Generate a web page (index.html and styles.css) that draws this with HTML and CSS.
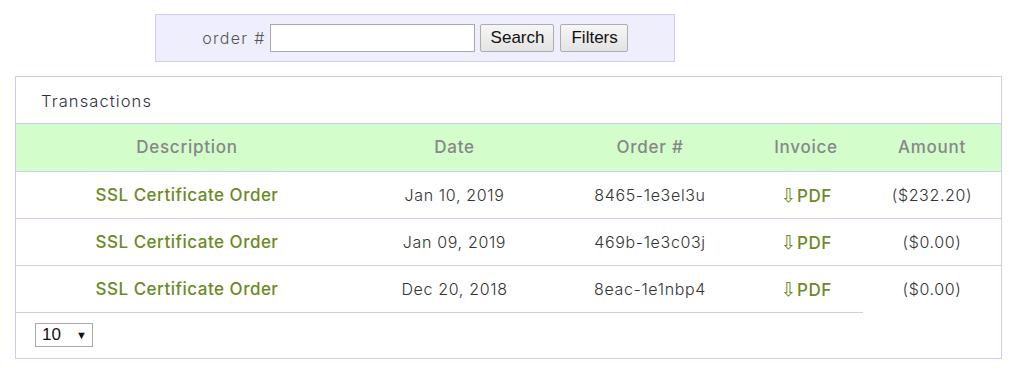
FILE: index.html
```html
<!DOCTYPE html>
<html>
<head>
<meta charset="utf-8">
<link rel="stylesheet" href="styles.css">
</head>
<body>
<form class="search-bar">
  <label class="search-label" for="order">order #</label>
  <input id="order" class="search-input" type="text">
  <button class="btn" type="button">Search</button>
  <button class="btn" type="button">Filters</button>
</form>
<section class="card">
  <div class="card-title">Transactions</div>
  <table class="tx">
    <colgroup>
      <col class="c-desc"><col class="c-date"><col class="c-order"><col class="c-inv"><col class="c-amt">
    </colgroup>
    <thead>
      <tr><th>Description</th><th>Date</th><th>Order #</th><th>Invoice</th><th>Amount</th></tr>
    </thead>
    <tbody>
      <tr><td><a class="link" href="#">SSL Certificate Order</a></td><td>Jan 10, 2019</td><td>8465-1e3el3u</td><td><a class="pdf" href="#"><span class="arrow">⇩</span>PDF</a></td><td>($232.20)</td></tr>
      <tr><td><a class="link" href="#">SSL Certificate Order</a></td><td>Jan 09, 2019</td><td>469b-1e3c03j</td><td><a class="pdf" href="#"><span class="arrow">⇩</span>PDF</a></td><td>($0.00)</td></tr>
      <tr class="last"><td><a class="link" href="#">SSL Certificate Order</a></td><td>Dec 20, 2018</td><td>8eac-1e1nbp4</td><td><a class="pdf" href="#"><span class="arrow">⇩</span>PDF</a></td><td>($0.00)</td></tr>
    </tbody>
  </table>
  <div class="card-foot">
    <span class="pager">10<span class="caret">▼</span></span>
  </div>
</section>
</body>
</html>
```
FILE: styles.css
```css
html, body { margin: 0; padding: 0; background: #fff; }
body {
  padding: 14px 14px 0 15px;
  font-family: Inter, "Open Sans", "Liberation Sans", sans-serif;
  color: #3a3a3a;
}
.search-bar {
  box-sizing: border-box;
  width: 520px;
  height: 48px;
  margin: 0 0 0 140px;
  background: #eeeefd;
  border: 1px solid #ccccf8;
  display: flex;
  align-items: center;
  justify-content: center;
}
.search-label {
  font-size: 16px;
  font-weight: 350;
  letter-spacing: 1.3px;
  color: #555;
  margin-right: 4px;
}
.search-input {
  box-sizing: border-box;
  width: 205px;
  height: 28px;
  border: 1px solid #a9a9a9;
  background: #fff;
  margin: 0 5px 0 0;
  padding: 0 4px;
}
.btn {
  box-sizing: border-box;
  height: 28px;
  font-family: "Liberation Sans", Arial, sans-serif;
  font-size: 17px;
  color: #111;
  background: linear-gradient(#f6f6f6, #e3e3e3);
  border: 1px solid #adadad;
  border-radius: 2px;
  padding: 0 9px 0 10px;
  margin: 0 6px 0 0;
}
.btn:last-child { margin-right: 0; }
.card {
  box-sizing: border-box;
  width: 987px;
  margin-top: 14px;
  border: 1px solid #ccccf8;
  background: #fff;
}
.card-title {
  height: 47px;
  padding: 2px 0 0 25px;
  display: flex;
  align-items: center;
  font-size: 16.5px;
  font-weight: 300;
  letter-spacing: 1.1px;
  color: #2f2f40;
  border-bottom: 1px solid #ccccf8;
  box-sizing: border-box;
}
.tx {
  width: 100%;
  border-collapse: collapse;
  table-layout: fixed;
  font-size: 16px;
  font-weight: 350;
  letter-spacing: 0.65px;
}
.c-desc { width: 342px; }
.c-date { width: 193px; }
.c-order { width: 198px; }
.c-inv { width: 114px; }
.c-amt { width: 138px; }
.tx th, .tx td {
  height: 47px;
  padding: 0;
  text-align: center;
  vertical-align: middle;
  border-bottom: 1px solid #ccccf8;
  box-sizing: border-box;
}
.tx th {
  background: #d3fdcb;
  color: #878787;
  font-weight: 450;
  font-size: 17px;
  letter-spacing: 0.75px;
}
.tx td { color: #333; }
.tx tr.last td:last-child { border-bottom: none; }
.link, .pdf {
  color: #6b8a26;
  text-decoration: none;
  font-weight: 470;
  font-size: 17px;
  letter-spacing: 0.5px;
}
.arrow {
  font-family: "DejaVu Sans", sans-serif;
  font-size: 19px;
  font-weight: 400;
  letter-spacing: 0;
  margin-right: 1px;
}
.card-foot {
  padding: 10px 0 11px 19px;
}
.pager {
  box-sizing: border-box;
  display: inline-flex;
  align-items: center;
  justify-content: space-between;
  width: 58px;
  height: 24px;
  padding: 0 5px 0 6px;
  border: 1px solid #a9a9a9;
  font-family: "Liberation Sans", Arial, sans-serif;
  font-size: 17px;
  color: #111;
}
.caret { font-size: 11px; }
```
